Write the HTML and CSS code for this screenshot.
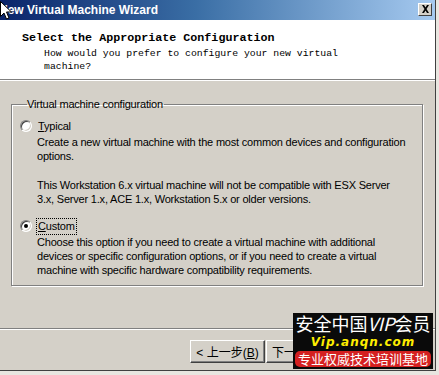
FILE: index.html
```html
<!DOCTYPE html>
<html lang="en">
  <head>
    <meta charset="UTF-8" />
    <title>New Virtual Machine Wizard</title>
    <link rel="stylesheet" href="styles.css">
  </head>
  <body>
    <div class="window">
      <div class="titlebar">
        <span class="title">New Virtual Machine Wizard</span>
        <span class="close-btn">
          <svg width="9" height="8" viewBox="0 0 9 8">
            <path d="M1 0h2l1.5 2.5L6 0h2L5.5 4 8 8H6L4.5 5.5 3 8H1l2.5-4z" fill="#000" />
          </svg>
        </span>
        <svg class="cursor" width="12" height="19" viewBox="0 0 12 19">
          <path d="M0.5 0.5v15l3.5-3.5 2.5 6 2.5-1-2.5-6h5z" fill="#fff" stroke="#000" stroke-width="1" />
        </svg>
      </div>

      <div class="header">
        <h1>Select the Appropriate Configuration</h1>
        <p>How would you prefer to configure your new virtual<br />machine?</p>
      </div>

      <div class="content">
        <fieldset class="group">
          <legend>Virtual machine configuration</legend>

          <div class="option">
            <span class="radio"></span>
            <span class="label"><u>T</u>ypical</span>
          </div>
          <p class="desc">Create a new virtual machine with the most common devices and configuration options.</p>
          <p class="desc note">This Workstation 6.x virtual machine will not be compatible with ESX Server 3.x, Server 1.x, ACE 1.x, Workstation 5.x or older versions.</p>

          <div class="option custom">
            <span class="radio checked"></span>
            <span class="label focus"><u>C</u>ustom</span>
          </div>
          <p class="desc">Choose this option if you need to create a virtual machine with additional devices or specific configuration options, or if you need to create a virtual machine with specific hardware compatibility requirements.</p>
        </fieldset>
      </div>

      <div class="footer">
        <button class="btn" type="button">&lt; 上一步(<u>B</u>)</button>
        <button class="btn" type="button">下一步(<u>N</u>) &gt;</button>
      </div>
    </div>

    <div class="watermark">
      <div class="wm-top">安全中国<i>VIP</i>会员</div>
      <div class="wm-url">Vip.anqn.com</div>
      <div class="wm-tag">专业权威技术培训基地</div>
    </div>
  </body>
</html>
```

FILE: styles.css
```css
* {
  margin: 0;
  padding: 0;
  box-sizing: border-box;
}

body {
  width: 439px;
  height: 375px;
  overflow: hidden;
  background-color: #e8e6e0;
  font-family: "Liberation Sans", Arial, sans-serif;
  font-size: 11px;
  letter-spacing: -0.2px;
  color: #000;
  position: relative;
}

.window {
  width: 436px;
  height: 371px;
  background-color: #d4d0c8;
  border-right: 1px solid #404040;
  border-bottom: 1px solid #404040;
  display: flex;
  flex-direction: column;
}

.titlebar {
  height: 20px;
  flex: none;
  background: linear-gradient(to right, #0a246a 0%, #3a6ea5 45%, #a6caf0 100%);
  display: flex;
  align-items: center;
  position: relative;
  padding-right: 3px;
}

.title {
  margin-left: -1px;
  font-weight: bold;
  font-size: 12px;
  letter-spacing: 0;
  color: #fff;
  flex: 1;
  white-space: nowrap;
}

.close-btn {
  width: 14px;
  height: 13px;
  background-color: #d4d0c8;
  border: 1px solid;
  border-color: #fff #404040 #404040 #fff;
  display: flex;
  align-items: center;
  justify-content: center;
  margin-top: -2px;
}

.cursor {
  position: absolute;
  left: 0;
  top: 1px;
}

.header {
  height: 60px;
  flex: none;
  background-color: #fff;
  border-bottom: 1px solid #808080;
  box-shadow: 0 1px 0 #fff;
  padding: 11px 0 0 22px;
  font-family: "Liberation Mono", "Courier New", monospace;
  letter-spacing: 0;
}

.header h1 {
  font-size: 11.7px;
  font-weight: bold;
  line-height: 14px;
}

.header p {
  font-size: 9.8px;
  line-height: 13px;
  margin: 2px 0 0 22px;
}

.content {
  height: 248px;
  flex: none;
  padding: 18px 12px 0 11px;
}

.group {
  border: 1px solid #808080;
  box-shadow: 1px 1px 0 #fff, inset 1px 1px 0 #fff;
  height: 188px;
  padding: 6px 10px 0 8px;
}

.group legend {
  padding: 0 1px 0 0;
  margin-left: 7px;
  line-height: 13px;
}

.option {
  display: flex;
  align-items: center;
  gap: 5px;
  height: 16px;
  margin-top: 1px;
}

.option.custom {
  margin-top: 12px;
}

.radio {
  width: 12px;
  height: 12px;
  border-radius: 50%;
  background-color: #fff;
  border: 1px solid;
  border-color: #808080 #fff #fff #808080;
  box-shadow: inset 1px 1px 0 #404040, inset -1px -1px 0 #d4d0c8;
  position: relative;
}

.radio.checked::after {
  content: "";
  position: absolute;
  left: 3px;
  top: 3px;
  width: 4px;
  height: 4px;
  border-radius: 50%;
  background-color: #000;
}

.label {
  padding: 1px 1px;
  line-height: 13px;
}

.label.focus {
  outline: 1px dotted #000;
}

.desc {
  width: 370px;
  margin-left: 17px;
  line-height: 14px;
  padding-top: 1px;
}

.desc.note {
  margin-top: 14px;
}

.footer {
  height: 42px;
  flex: none;
  border-top: 1px solid #808080;
  box-shadow: inset 0 1px 0 #fff;
  display: flex;
  gap: 1px;
  padding: 11px 0 0 190px;
}

.btn {
  width: 75px;
  height: 23px;
  font-family: "Liberation Sans", "Noto Sans CJK SC", sans-serif;
  font-size: 12px;
  letter-spacing: 0;
  background-color: #d4d0c8;
  border: 1px solid;
  border-color: #fff #404040 #404040 #fff;
  box-shadow: inset -1px -1px 0 #808080;
}

.watermark {
  position: absolute;
  left: 293px;
  top: 313px;
  width: 140px;
  height: 56px;
  background-color: #0a0a0a;
  display: flex;
  flex-direction: column;
  align-items: center;
  font-family: "Noto Sans CJK SC", sans-serif;
  letter-spacing: 0;
}

.wm-top {
  color: #fff;
  font-size: 18px;
  line-height: 21px;
  white-space: nowrap;
}

.wm-url {
  color: #ffee00;
  font-family: "DejaVu Sans", sans-serif;
  font-weight: bold;
  font-style: italic;
  font-size: 12px;
  letter-spacing: 1px;
  line-height: 16px;
}

.wm-tag {
  margin-top: 1px;
  background-color: #d42020;
  color: #fff;
  border-radius: 5px;
  font-size: 13px;
  line-height: 16px;
  padding: 0 3px;
  white-space: nowrap;
}
```
